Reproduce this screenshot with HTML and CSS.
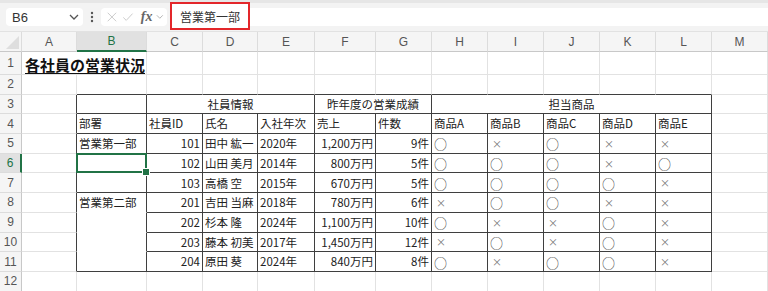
FILE: index.html
```html
<!DOCTYPE html>
<html lang="ja">
<head>
    <meta charset="UTF-8">
    <title>各社員の営業状況</title>
    <link rel="stylesheet" href="styles.css">
</head>
<body>
    <div class="formula-bar">
        <div class="name-box">
            <span>B6</span>
            <svg width="10" height="6" viewBox="0 0 10 6"><path d="M1 1l4 4 4-4" fill="none" stroke="#555" stroke-width="1.3"/></svg>
        </div>
        <div class="dots">
            <svg width="4" height="12" viewBox="0 0 4 12"><circle cx="2" cy="2" r="1.2" fill="#555"/><circle cx="2" cy="6" r="1.2" fill="#555"/><circle cx="2" cy="10" r="1.2" fill="#555"/></svg>
        </div>
        <div class="fx-box">
            <svg width="14" height="14" viewBox="0 0 14 14"><path d="M2 2l10 10M12 2L2 12" stroke="#c8c8c8" stroke-width="1.1"/></svg>
            <svg width="14" height="14" viewBox="0 0 14 14"><path d="M1.5 7.5l3.5 3.5 7.5-8" fill="none" stroke="#c8c8c8" stroke-width="1.1"/></svg>
            <span class="fx">fx</span>
            <svg width="9" height="6" viewBox="0 0 9 6"><path d="M1 1l3.5 3.5L8 1" fill="none" stroke="#aaa" stroke-width="1"/></svg>
        </div>
        <div class="formula-input">
            <div class="formula-text">営業第一部</div>
        </div>
    </div>

    <div class="sheet">
        <div class="row head">
            <div class="corner"></div>
            <div class="ch">A</div><div class="ch sel">B</div><div class="ch">C</div><div class="ch">D</div>
            <div class="ch">E</div><div class="ch">F</div><div class="ch">G</div><div class="ch">H</div>
            <div class="ch">I</div><div class="ch">J</div><div class="ch">K</div><div class="ch">L</div><div class="ch">M</div>
        </div>

        <div class="row r1">
            <div class="rh">1</div>
            <div class="c title span2">各社員の営業状況</div>
            <div class="c"></div><div class="c"></div><div class="c"></div><div class="c"></div><div class="c"></div>
            <div class="c"></div><div class="c"></div><div class="c"></div><div class="c"></div><div class="c"></div><div class="c"></div>
        </div>

        <div class="row">
            <div class="rh">2</div>
            <div class="c"></div>
            <div class="c tt"></div><div class="c tt"></div><div class="c tt"></div><div class="c tt"></div><div class="c tt"></div>
            <div class="c tt"></div><div class="c tt"></div><div class="c tt"></div><div class="c tt"></div><div class="c tt"></div><div class="c tt"></div>
            <div class="c"></div>
        </div>

        <div class="row">
            <div class="rh">3</div>
            <div class="c tl"></div>
            <div class="c t"></div>
            <div class="c t ctr span3">社員情報</div>
            <div class="c t ctr span2">昨年度の営業成績</div>
            <div class="c t ctr span5">担当商品</div>
            <div class="c"></div>
        </div>

        <div class="row">
            <div class="rh">4</div>
            <div class="c tl"></div>
            <div class="c t">部署</div><div class="c t">社員ID</div><div class="c t">氏名</div><div class="c t">入社年次</div>
            <div class="c t">売上</div><div class="c t">件数</div><div class="c t">商品A</div><div class="c t">商品B</div>
            <div class="c t">商品C</div><div class="c t">商品D</div><div class="c t">商品E</div>
            <div class="c"></div>
        </div>

        <div class="row">
            <div class="rh">5</div>
            <div class="c tl"></div>
            <div class="c t nb">営業第一部</div><div class="c t num">101</div><div class="c t">田中 紘一</div><div class="c t">2020年</div>
            <div class="c t num">1,200万円</div><div class="c t num">9件</div>
            <div class="c t o">○</div><div class="c t x">×</div><div class="c t o">○</div><div class="c t x">×</div><div class="c t x">×</div>
            <div class="c"></div>
        </div>

        <div class="row">
            <div class="rh cur">6</div>
            <div class="c tl"></div>
            <div class="c t nb active"></div><div class="c t num">102</div><div class="c t">山田 美月</div><div class="c t">2014年</div>
            <div class="c t num">800万円</div><div class="c t num">5件</div>
            <div class="c t o">○</div><div class="c t o">○</div><div class="c t o">○</div><div class="c t x">×</div><div class="c t o">○</div>
            <div class="c"></div>
        </div>

        <div class="row">
            <div class="rh">7</div>
            <div class="c tl"></div>
            <div class="c t"></div><div class="c t num">103</div><div class="c t">高橋 空</div><div class="c t">2015年</div>
            <div class="c t num">670万円</div><div class="c t num">5件</div>
            <div class="c t o">○</div><div class="c t o">○</div><div class="c t o">○</div><div class="c t o">○</div><div class="c t x">×</div>
            <div class="c"></div>
        </div>

        <div class="row">
            <div class="rh">8</div>
            <div class="c tl"></div>
            <div class="c t nb">営業第二部</div><div class="c t num">201</div><div class="c t">吉田 当麻</div><div class="c t">2018年</div>
            <div class="c t num">780万円</div><div class="c t num">6件</div>
            <div class="c t x">×</div><div class="c t o">○</div><div class="c t o">○</div><div class="c t x">×</div><div class="c t x">×</div>
            <div class="c"></div>
        </div>

        <div class="row">
            <div class="rh">9</div>
            <div class="c tl"></div>
            <div class="c t nb"></div><div class="c t num">202</div><div class="c t">杉本 隆</div><div class="c t">2024年</div>
            <div class="c t num">1,100万円</div><div class="c t num">10件</div>
            <div class="c t o">○</div><div class="c t x">×</div><div class="c t x">×</div><div class="c t o">○</div><div class="c t x">×</div>
            <div class="c"></div>
        </div>

        <div class="row">
            <div class="rh">10</div>
            <div class="c tl"></div>
            <div class="c t nb"></div><div class="c t num">203</div><div class="c t">藤本 初美</div><div class="c t">2017年</div>
            <div class="c t num">1,450万円</div><div class="c t num">12件</div>
            <div class="c t x">×</div><div class="c t o">○</div><div class="c t x">×</div><div class="c t o">○</div><div class="c t x">×</div>
            <div class="c"></div>
        </div>

        <div class="row">
            <div class="rh">11</div>
            <div class="c tl"></div>
            <div class="c t"></div><div class="c t num">204</div><div class="c t">原田 葵</div><div class="c t">2024年</div>
            <div class="c t num">840万円</div><div class="c t num">8件</div>
            <div class="c t o">○</div><div class="c t x">×</div><div class="c t o">○</div><div class="c t o">○</div><div class="c t x">×</div>
            <div class="c"></div>
        </div>

        <div class="row">
            <div class="rh">12</div>
            <div class="c"></div><div class="c"></div><div class="c"></div><div class="c"></div><div class="c"></div><div class="c"></div>
            <div class="c"></div><div class="c"></div><div class="c"></div><div class="c"></div><div class="c"></div><div class="c"></div><div class="c"></div>
        </div>
    </div>
</body>
</html>
```

FILE: styles.css
```css
* {
    margin: 0;
    padding: 0;
    box-sizing: border-box;
}

body {
    width: 768px;
    height: 291px;
    overflow: hidden;
    background: #fff;
    font-family: "Noto Sans CJK JP", "Noto Sans", sans-serif;
    color: #222;
}

/* formula bar */
.formula-bar {
    display: flex;
    align-items: stretch;
    height: 32px;
    padding: 5px 0 5px 6px;
    background: #f3f3f3;
    border-top: 3px solid #e6e6e6;
    border-bottom: 1px solid #e2e2e2;
}

.name-box {
    display: flex;
    align-items: center;
    justify-content: space-between;
    width: 77px;
    padding: 0 4px 0 6px;
    background: #fff;
    border-radius: 4px;
    font-family: "Liberation Sans", Arial, sans-serif;
    font-size: 13px;
    color: #333;
}

.dots {
    display: flex;
    align-items: center;
    justify-content: center;
    width: 18px;
}

.fx-box {
    display: flex;
    align-items: center;
    gap: 4px;
    width: 66px;
    padding: 0 3px 0 5px;
    background: #fff;
    border-radius: 4px;
}

.fx {
    font-family: "Liberation Serif", serif;
    font-style: italic;
    font-weight: bold;
    font-size: 14px;
    color: #666;
    margin-left: 3px;
}

.formula-input {
    flex: 1;
    margin-left: 3px;
    background: #fff;
    position: relative;
}

.formula-text {
    position: absolute;
    left: 0;
    top: -6px;
    width: 80px;
    height: 28px;
    border: 2px solid #e3262a;
    display: flex;
    align-items: center;
    justify-content: center;
    font-size: 12px;
    color: #333;
    background: #fff;
}

/* sheet grid */
.sheet {
    display: flex;
    flex-direction: column;
}

.row {
    display: grid;
    grid-template-columns: 22px 55px 70px 56px 55px 57px 61px 56px 56px 56px 56px 56px 56px 56px;
    height: 19.7px;
}

.row.head {
    height: 20px;
    background: #f5f5f5;
}

.row.r1 {
    height: 23px;
}

.corner {
    position: relative;
    border-right: 1px solid #dcdcdc;
    border-bottom: 1px solid #c8c8c8;
}

.corner::after {
    content: "";
    position: absolute;
    right: 2px;
    bottom: 2px;
    border-left: 13px solid transparent;
    border-bottom: 13px solid #dedede;
}

.ch {
    display: flex;
    align-items: center;
    justify-content: center;
    font-family: "Liberation Sans", Arial, sans-serif;
    font-size: 12px;
    color: #555;
    border-right: 1px solid #dcdcdc;
    border-bottom: 1px solid #c8c8c8;
}

.ch.sel {
    background: #e1e1e1;
    color: #217346;
    border-bottom: 2px solid #217346;
}

.rh {
    display: flex;
    align-items: center;
    justify-content: center;
    background: #f5f5f5;
    font-family: "Liberation Sans", Arial, sans-serif;
    font-size: 12px;
    color: #555;
    border-right: 1px solid #c8c8c8;
    border-bottom: 1px solid #dcdcdc;
}

.rh.cur {
    background: #e1e1e1;
    color: #217346;
    border-right: 2px solid #217346;
}

.c {
    display: flex;
    align-items: center;
    padding: 1px 2px 0;
    font-size: 11.5px;
    line-height: 1;
    white-space: nowrap;
    color: #222;
    border-right: 1px solid #e2e2e2;
    border-bottom: 1px solid #e2e2e2;
}

.c.title {
    font-size: 15px;
    font-weight: bold;
    text-decoration: underline;
    text-underline-offset: 2px;
    padding-left: 3px;
    padding-top: 2px;
    color: #111;
}

.span2 { grid-column: span 2; }
.span3 { grid-column: span 3; }
.span5 { grid-column: span 5; }

.c.tt { border-bottom-color: #3f3f3f; }
.c.tl { border-right-color: #3f3f3f; }
.c.t {
    border-right-color: #3f3f3f;
    border-bottom-color: #3f3f3f;
}
.c.t.nb { border-bottom-color: #fff; }

.c.ctr { justify-content: center; }
.c.num { justify-content: flex-end; }

.c.o {
    font-size: 13px;
    color: #444;
}

.c.x {
    font-size: 10px;
    color: #777;
    padding-left: 4px;
}

.c.active {
    position: relative;
}

.c.active::after {
    content: "";
    position: absolute;
    left: -1px;
    top: -1px;
    right: -1px;
    bottom: -1px;
    border: 2px solid #217346;
}

.c.active::before {
    content: "";
    position: absolute;
    right: -4px;
    bottom: -4px;
    width: 6px;
    height: 6px;
    background: #217346;
    border: 1px solid #fff;
    z-index: 1;
}
```
